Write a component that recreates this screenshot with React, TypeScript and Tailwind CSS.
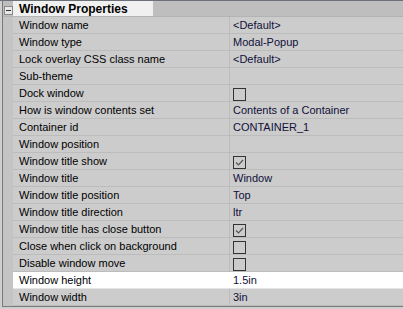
import React from 'react';

interface IRow {
  label: string;
  value?: string;
  check?: boolean;
  selected?: boolean;
}

const rows: IRow[] = [
  { label: 'Window name', value: '<Default>' },
  { label: 'Window type', value: 'Modal-Popup' },
  { label: 'Lock overlay CSS class name', value: '<Default>' },
  { label: 'Sub-theme', value: '' },
  { label: 'Dock window', check: false },
  { label: 'How is window contents set', value: 'Contents of a Container' },
  { label: 'Container id', value: 'CONTAINER_1' },
  { label: 'Window position', value: '' },
  { label: 'Window title show', check: true },
  { label: 'Window title', value: 'Window' },
  { label: 'Window title position', value: 'Top' },
  { label: 'Window title direction', value: 'ltr' },
  { label: 'Window title has close button', check: true },
  { label: 'Close when click on background', check: false },
  { label: 'Disable window move', check: false },
  { label: 'Window height', value: '1.5in', selected: true },
  { label: 'Window width', value: '3in' },
];

const CheckBox: React.FC<{ checked: boolean }> = ({ checked }) => (
  <div className="w-[13px] h-[13px] border border-[#333333] mt-[3px]">
    {checked && (
      <svg width="11" height="11" viewBox="0 0 11 11" className="block">
        <path d="M2 5.5 L4.5 8 L9 3" fill="none" stroke="#555555" strokeWidth="1.2" />
      </svg>
    )}
  </div>
);

const App: React.FC = () => {
  return (
    <div
      className="w-[403px] h-[309px] bg-[#cfcfcf] border-t border-[#6c7178] overflow-hidden text-[11px] text-black"
      style={{ fontFamily: '"Liberation Sans", Arial, sans-serif' }}
    >
      <div className="ml-[2px] border-l border-b border-[#7a7a7a] bg-[#c4c4c4]">
        {/* header */}
        <div className="flex h-[16px] bg-[#bebebe] border-b border-[#b4b4b4]">
          <div className="w-[10px] flex items-start pt-[5px] pl-[1px]">
            <div className="w-[9px] h-[9px] border border-[#8a8a8a] bg-[#e8e8e8] flex items-center justify-center">
              <div className="w-[5px] h-px bg-[#333333]" />
            </div>
          </div>
          <div className="w-[140px] bg-[#f0f0f0] pl-[6px] font-bold text-[12px] leading-[16px]">Window Properties</div>
        </div>
        {rows.map((row, idx) => (
          <div key={idx} className="flex h-[17px] leading-[16px]">
            <div className="w-[10px] bg-[#c4c4c4]" />
            <div
              className={`flex flex-1 border-b ${row.selected ? 'bg-white border-[#e4e4e4]' : 'bg-[#cccccc] border-[#bcbcbc]'}`}
            >
              <div className={`w-[217px] pl-[6px] border-r ${row.selected ? 'border-white' : 'border-[#bcbcbc]'} whitespace-nowrap`}>
                {row.label}
              </div>
              <div className="flex-1 pl-[3px] whitespace-nowrap text-[#10103a]">
                {row.check !== undefined ? <CheckBox checked={row.check} /> : row.value}
              </div>
            </div>
          </div>
        ))}
      </div>
    </div>
  );
};

export default App;
